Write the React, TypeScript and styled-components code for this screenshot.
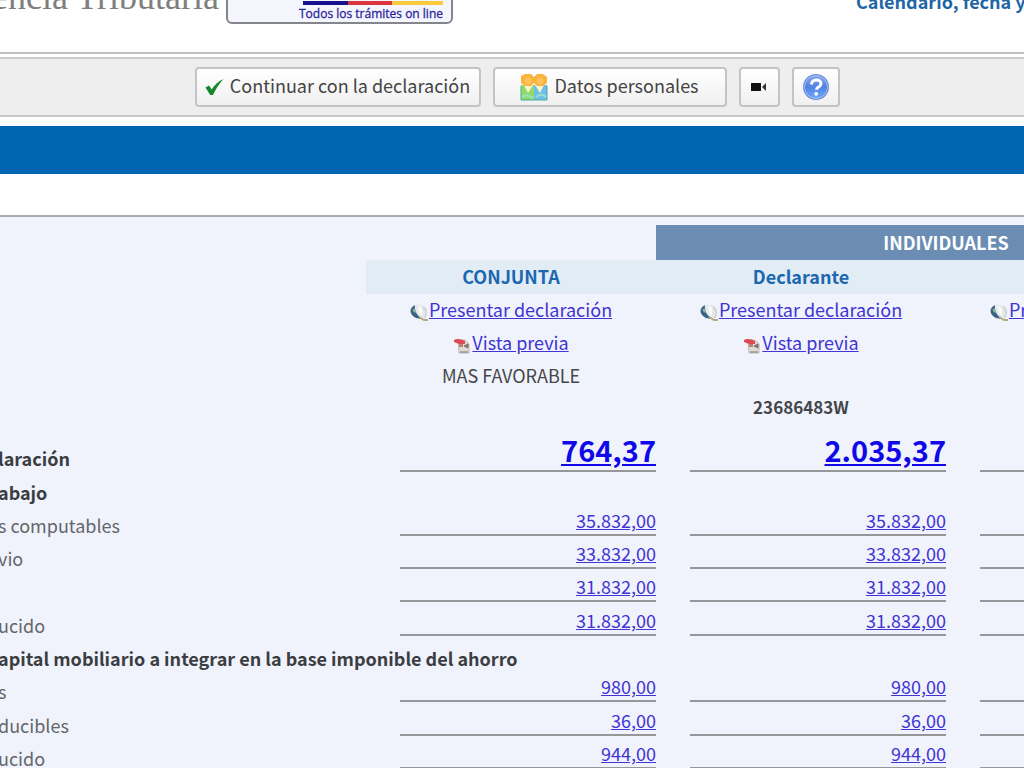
import React from "react";
import styled, { createGlobalStyle } from "styled-components";

const sans = `"Noto Sans CJK SC", "Open Sans", sans-serif`;

const GlobalStyle = createGlobalStyle`
  * { box-sizing: border-box; }
  html, body { margin: 0; padding: 0; }
  body { overflow: hidden; background: #ffffff; color: #444649; font: 18px/24px ${sans}; }
`;

const Header = styled.header`
  display: flex;
  align-items: flex-end;
  height: 54px;
  padding-bottom: 28px;
  border-bottom: 2px solid #c0c0c0;
`;
const AgencyName = styled.div`
  display: flex;
  justify-content: flex-end;
  flex: 0 0 219px;
  padding-bottom: 8px;
  overflow: hidden;
  white-space: nowrap;
  font: 36px/38px "Liberation Serif", serif;
  color: #7e7e7e;
`;
const OfficeBadge = styled.div`
  flex: 0 0 227px;
  display: flex;
  flex-direction: column;
  align-items: flex-end;
  height: 60px;
  margin: 0 0 0 7px;
  padding: 35px 8px 0 0;
  border: 2px solid #85858c;
  border-radius: 6px;
  background: #f4f5fd;
`;
const Stripes = styled.div`
  display: grid;
  grid-template-columns: 45px 44px 51px;
  height: 4px;
`;
const Stripe = styled.span<{ $color: string }>`
  background: ${(p) => p.$color};
`;
const Motto = styled.div`
  padding-top: 1px;
  font: 12px/16px "Open Sans", sans-serif;
  -webkit-text-stroke: 0.3px #2c2699;
  color: #2c2699;
`;
const CalendarLink = styled.a`
  flex: none;
  width: 168px;
  margin-left: auto;
  padding-bottom: 11px;
  white-space: nowrap;
  font-weight: bold;
  font-size: 18px;
  text-decoration: none;
  color: #1f66a5;
`;

const Toolbar = styled.nav`
  display: flex;
  justify-content: center;
  align-items: center;
  gap: 12px;
  height: 60px;
  margin-top: 3px;
  padding-left: 10px;
  background: #eeeeee;
  border-top: 2px solid #cccccc;
  border-bottom: 2px solid #c6c9c2;
`;
const ToolButton = styled.button<{ $width: number }>`
  display: flex;
  justify-content: center;
  align-items: center;
  gap: 6px;
  width: ${(p) => p.$width}px;
  height: 40px;
  padding: 0;
  border: 2px solid #c4c4c4;
  border-radius: 4px;
  background: linear-gradient(#ffffff, #f0f0f0);
  font: 18px/24px ${sans};
  color: #444444;
  white-space: nowrap;
`;
const ButtonText = styled.span`
  padding-bottom: 5px;
`;
const TitleBand = styled.div`
  height: 48px;
  margin: 9px 0 41px;
  background: #0066b3;
`;
const Summary = styled.main`
  min-height: 553px;
  padding-top: 8px;
  overflow: hidden;
  border-top: 2px solid #a9abae;
  background: #f0f3fb;
`;
const Table = styled.table`
  table-layout: fixed;
  width: 1236px;
  border-collapse: collapse;
`;
const Col = styled.col<{ $width: number }>`
  width: ${(p) => p.$width}px;
`;
const Row = styled.tr<{ $height: number }>`
  height: ${(p) => p.$height}px;
`;
const GroupHead = styled.th`
  padding: 0 0 2px;
  background: #6b8db3;
  color: #ffffff;
  font-size: 18px;
`;
const ColumnHead = styled.th`
  padding: 0 0 2px;
  background: #e2ecf4;
  color: #1b67b0;
  font-size: 18px;
`;
const Blank = styled.td`
  padding: 0;
`;
const CenterCell = styled.td<{ $strong?: boolean }>`
  padding: 0 0 3px;
  text-align: center;
  font-weight: ${(p) => (p.$strong ? "bold" : "normal")};
  font-size: ${(p) => (p.$strong ? 17 : 18)}px;
  svg { vertical-align: -5px; }
`;
const Label = styled.th<{ $strong?: boolean; $raised?: boolean }>`
  padding: 0 0 ${(p) => (p.$raised ? 5 : 2)}px;
  vertical-align: bottom;
  text-align: left;
  text-indent: -2px;
  white-space: nowrap;
  line-height: 18px;
  font-size: 18px;
  font-weight: ${(p) => (p.$strong ? "bold" : "normal")};
  color: ${(p) => (p.$strong ? "#3b3d42" : "#64666b")};
`;
const AmountCell = styled.td`
  padding: 0 0 0 34px;
  vertical-align: bottom;
`;
const Amount = styled.div<{ $big?: boolean }>`
  border-bottom: 2px solid #96979b;
  text-align: right;
  font-size: ${(p) => (p.$big ? 29 : 18)}px;
  line-height: ${(p) => (p.$big ? 34 : 22)}px;
  min-height: ${(p) => (p.$big ? 40 : 27)}px;
  font-weight: ${(p) => (p.$big ? "bold" : "normal")};
`;
const Link = styled.a<{ $big?: boolean }>`
  color: ${(p) => (p.$big ? "#1008e8" : "#4133d4")};
  text-decoration: underline;
`;

const CheckIcon = () => (
  <svg width="19" height="18" viewBox="0 0 19 18">
    <path d="M.5 9.500 4 7.500l2.800 4C9.500 7 13 3.500 18.500 1 14 6 10.500 11 8 17H5.200Z" fill="#12872c" />
  </svg>
);
const PeopleIcon = () => (
  <svg width="28" height="28" viewBox="0 0 28 28">
    <rect x="1" y="12" width="13" height="15" fill="#8fdc68" />
    <rect x="14" y="12" width="13" height="15" fill="#6fbfe8" />
    <path d="M1 27V13M27 27V13M1 27H27" stroke="#4aa6a0" fill="none" />
    <path d="M4 12h9l-5 8ZM15 12h9l-4 8Z" fill="#fff3cf" />
    <path d="M1 3 5 1h6l3 3 3-3h6l4 3v6l-4 3h-6l-3-3-3 3H5L1 10Z" fill="#f8b43c" />
    <circle cx="8" cy="8" r="3.500" fill="#fdc25a" />
    <circle cx="20" cy="8" r="3.500" fill="#fdc25a" />
    <path d="M2 24c4-3 8-1 11 1M16 24c3-3 7-3 10 0" stroke="#9be3c8" strokeWidth="2" fill="none" />
  </svg>
);
const CameraIcon = () => (
  <svg width="16" height="10" viewBox="0 0 16 10">
    <rect x="0" y="1" width="10" height="8" fill="#111" />
    <path d="M11 5l4-4v8Z" fill="#333" />
  </svg>
);
const HelpIcon = () => (
  <svg width="28" height="28" viewBox="0 0 28 28">
    <defs>
      <linearGradient id="helpFill" x1="0" y1="0" x2="0" y2="1">
        <stop offset="0" stopColor="#89abef" />
        <stop offset="0.500" stopColor="#4f82e4" />
        <stop offset="1" stopColor="#6da8f8" />
      </linearGradient>
    </defs>
    <circle cx="14" cy="14" r="13" fill="#6a8cd8" />
    <circle cx="14" cy="14" r="11.500" fill="url(#helpFill)" stroke="#a5bff2" />
    <path d="M9.500 11.500c0-6 9.500-6 9.500-.8 0 3.500-4.500 3-4.500 6" fill="none" stroke="#fff" strokeWidth="3" />
    <circle cx="14.200" cy="20.800" r="1.900" fill="#fff" />
  </svg>
);
const GlobeIcon = () => (
  <svg width="19" height="19" viewBox="0 0 19 19">
    <circle cx="8.500" cy="8.500" r="7" fill="#e3e9ee" />
    <path d="M5 2C-1 5-1 11 5 14.500c3 1.500 5 1.500 6 .5C7 12 4 8 5 2Z" fill="#3a6288" />
    <path d="M2.500 6c2-1 3 0 4 4L3.500 9Z" fill="#8fb59b" />
    <path d="M8 3l4 2v8l-3-3Z" fill="#fbfbf4" />
    <path d="M13 4c4 2 4 8 1 11" stroke="#d3d6d2" strokeWidth="2" fill="none" />
    <path d="M9 14l5 3h4" stroke="#b3aa80" strokeWidth="2" fill="none" />
  </svg>
);
const PdfIcon = () => (
  <svg width="19" height="18" viewBox="0 0 19 18">
    <path d="M5 3h7l4 4v9H6Z" fill="#dedad4" stroke="#c0bab2" />
    <path d="M1 3c3-2 7-1 11 1v3H6L1 5Z" fill="#dc4a54" />
    <path d="M6 7h4v3H6Z" fill="#c08078" />
    <path d="M11 9l4-2v4ZM7 15h8" stroke="#7e766f" fill="#7e766f" />
  </svg>
);

type Line = { label: string; values?: string[]; height: number };
const lines: Line[] = [
  { label: "abajo", height: 31 },
  { label: "s computables", values: ["35.832,00", "35.832,00", ""], height: 33 },
  { label: "vio", values: ["33.832,00", "33.832,00", ""], height: 33 },
  { label: "", values: ["31.832,00", "31.832,00", ""], height: 33 },
  { label: "ucido", values: ["31.832,00", "31.832,00", ""], height: 34 },
  { label: "apital mobiliario a integrar en la base imponible del ahorro", height: 33 },
  { label: "s", values: ["980,00", "980,00", ""], height: 33 },
  { label: "ducibles", values: ["36,00", "36,00", ""], height: 34 },
  { label: "ucido", values: ["944,00", "944,00", ""], height: 33 },
];
const columns = [0, 1, 2];

export default function App() {
  return (
    <>
      <GlobalStyle />
      <Header>
        <AgencyName>encia Tributaria</AgencyName>
        <OfficeBadge>
          <Stripes>
            <Stripe $color="#17118c" />
            <Stripe $color="#d9363e" />
            <Stripe $color="#fcca3e" />
          </Stripes>
          <Motto>Todos los trámites on line</Motto>
        </OfficeBadge>
        <CalendarLink href="#calendario">Calendario, fecha y</CalendarLink>
      </Header>
      <Toolbar>
        <ToolButton $width={286}><CheckIcon /><ButtonText>Continuar con la declaración</ButtonText></ToolButton>
        <ToolButton $width={234}><PeopleIcon /><ButtonText>Datos personales</ButtonText></ToolButton>
        <ToolButton $width={41} aria-label="Vídeo"><CameraIcon /></ToolButton>
        <ToolButton $width={48} aria-label="Ayuda"><HelpIcon /></ToolButton>
      </Toolbar>
      <TitleBand />
      <Summary>
        <Table>
          <colgroup>
            <Col $width={366} />
            {columns.map((c) => <Col key={c} $width={290} />)}
          </colgroup>
          <thead>
            <Row $height={35}>
              <Blank colSpan={2} />
              <GroupHead colSpan={2}>INDIVIDUALES</GroupHead>
            </Row>
            <Row $height={34}>
              <Blank />
              <ColumnHead>CONJUNTA</ColumnHead>
              <ColumnHead>Declarante</ColumnHead>
              <ColumnHead />
            </Row>
          </thead>
          <tbody>
            <Row $height={33}>
              <Blank />
              {columns.map((c) => (
                <CenterCell key={c}><GlobeIcon /><Link href="#presentar">Presentar declaración</Link></CenterCell>
              ))}
            </Row>
            <Row $height={33}>
              <Blank />
              {columns.map((c) => (
                <CenterCell key={c}><PdfIcon /><Link href="#previa">Vista previa</Link></CenterCell>
              ))}
            </Row>
            <Row $height={33}>
              <Blank />
              <CenterCell>MAS FAVORABLE</CenterCell>
              <Blank colSpan={2} />
            </Row>
            <Row $height={31}>
              <Blank colSpan={2} />
              <CenterCell $strong>23686483W</CenterCell>
              <Blank />
            </Row>
            <Row $height={48}>
              <Label scope="row" $strong $raised>laración</Label>
              {["764,37", "2.035,37", ""].map((v, i) => (
                <AmountCell key={i}><Amount $big>{v && <Link href="#resultado" $big>{v}</Link>}</Amount></AmountCell>
              ))}
            </Row>
            {lines.map((line, i) => (
              <Row key={i} $height={line.height}>
                <Label scope="row" $strong={!line.values} colSpan={line.values ? 1 : 4}>{line.label}</Label>
                {line.values?.map((v, j) => (
                  <AmountCell key={j}><Amount>{v && <Link href="#detalle">{v}</Link>}</Amount></AmountCell>
                ))}
              </Row>
            ))}
          </tbody>
        </Table>
      </Summary>
    </>
  );
}
